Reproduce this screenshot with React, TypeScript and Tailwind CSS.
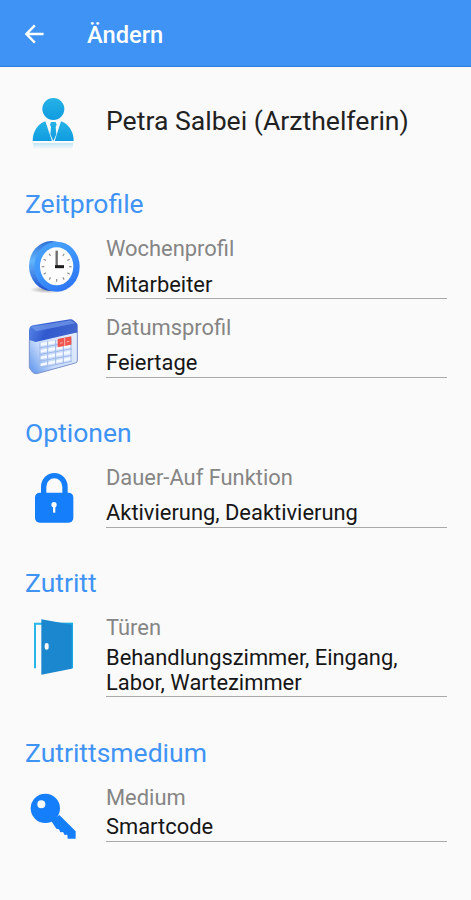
import type { ReactNode } from "react";

function BackArrow() {
  return (
    <svg width="20" height="20" viewBox="0 0 20 20" fill="none" stroke="#fff" strokeWidth="2.4">
      <path d="M19.6 10H2.4M10.8 1.4 2.4 10l8.4 8.6" />
    </svg>
  );
}

function PersonIcon() {
  return (
    <svg width="60" height="60" viewBox="12 30 180 180">
      <defs>
        <linearGradient id="person" x1="0" y1="0" x2="0" y2="1">
          <stop offset="0" stopColor="#27b3e6" />
          <stop offset="1" stopColor="#0f9be0" />
        </linearGradient>
        <linearGradient id="mirror" x1="0" y1="0" x2="0" y2="1">
          <stop offset="0" stopColor="#bfe6f5" />
          <stop offset="1" stopColor="#fafafa" />
        </linearGradient>
      </defs>
      <circle cx="100" cy="72" r="33" fill="url(#person)" />
      <path d="M76 109 96 168H38c0-26 13-50 38-59Z" fill="url(#person)" />
      <path d="M123 109 104 168h57c0-26-13-50-38-59Z" fill="url(#person)" />
      <path d="M93 111h14l3 8-3 7 2 22-9 20-9-20 2-22-3-7Z" fill="url(#person)" />
      <path d="M38 174h122l-3 18H42Z" fill="url(#mirror)" />
    </svg>
  );
}

function ClockIcon() {
  const ticks = [0, 30, 60, 90, 120, 150, 180, 210, 240, 270, 300, 330];
  return (
    <svg width="60" height="60" viewBox="12 18 180 180">
      <defs>
        <linearGradient id="rim" x1="0" y1="0" x2="0.6" y2="1">
          <stop offset="0" stopColor="#49a4fb" />
          <stop offset="0.5" stopColor="#3f97fb" />
          <stop offset="1" stopColor="#2f78f5" />
        </linearGradient>
        <linearGradient id="side" x1="0" y1="0" x2="0" y2="1">
          <stop offset="0" stopColor="#2e6fd6" />
          <stop offset="0.4" stopColor="#64b6fb" />
          <stop offset="1" stopColor="#1f4fd0" />
        </linearGradient>
        <radialGradient id="clockShadow">
          <stop offset="0" stopColor="#777" stopOpacity="0.7" />
          <stop offset="1" stopColor="#777" stopOpacity="0" />
        </radialGradient>
      </defs>
      <ellipse cx="82" cy="179" rx="52" ry="11" fill="url(#clockShadow)" />
      <ellipse cx="94" cy="108" rx="67" ry="75" fill="url(#side)" />
      <ellipse cx="111" cy="110" rx="68" ry="75" fill="url(#rim)" />
      <ellipse cx="110" cy="109" rx="50" ry="57" fill="#fdfdfd" />
      {ticks.map((a) => (
        <path key={a} d="M110 65v8" transform={`rotate(${a} 110 110)`} stroke="#8d8d92" strokeWidth="3.5" />
      ))}
      <path d="M110 62v48" stroke="#6c6c6c" strokeWidth="7" />
      <path d="M105 110h27" stroke="#1c1c1c" strokeWidth="9" />
    </svg>
  );
}

function CalendarIcon() {
  return (
    <svg width="60" height="60" viewBox="12 15 180 180">
      <defs>
        <linearGradient id="sheet" x1="0" y1="0.8" x2="1" y2="0.2">
          <stop offset="0" stopColor="#6ea0ef" />
          <stop offset="0.35" stopColor="#c6dafb" />
          <stop offset="1" stopColor="#e4edfd" />
        </linearGradient>
        <linearGradient id="band" x1="0" y1="0" x2="1" y2="0.2">
          <stop offset="0" stopColor="#5d8be8" />
          <stop offset="0.45" stopColor="#3059cf" />
          <stop offset="1" stopColor="#4065cc" />
        </linearGradient>
      </defs>
      <path d="M28 90 172 66v86q0 6-6 7L50 191q-8 1-13-5l-9-13Z" fill="url(#sheet)" stroke="#7d92cc" strokeWidth="3" />
      <path d="M27 60q1-12 12-14L150 28q6-1 10 3l9 7q4 3 4 9v20L47 96 27 89Z" fill="url(#band)" />
      <path d="M34 50 152 31l14 9L49 64Z" fill="#7fa5ef" opacity="0.6" />
      <path d="M60 104 110 95M60 124l94-17M60 144l94-18M60 165l94-20" stroke="#f4f8ff" strokeWidth="8" />
      <path
        d="M60 98v75M83 94v74M107 90v74M130 86v74M153 83v72M58 114l97-18M58 134l97-18M58 154l97-18M58 174l97-20"
        stroke="#9db7ea"
        strokeWidth="3"
        fill="none"
      />
      <path d="m113 87 41-8v25l-41 8Z" fill="#f0564e" />
      <path d="M134 84v24M120 100l8-2M140 96l8-2" stroke="#f8b5b0" strokeWidth="3" />
    </svg>
  );
}

function LockIcon() {
  return (
    <svg width="60" height="60" viewBox="12 9 180 180">
      <path d="M71 100V74a32 33 0 0 1 64 0v26" fill="none" stroke="#157efb" strokeWidth="16" />
      <rect x="45" y="92" width="115" height="90" rx="14" fill="#157efb" />
      <circle cx="102" cy="128" r="8" fill="#fafafa" />
      <path d="M99 132h7v20h-7Z" fill="#fafafa" />
    </svg>
  );
}

function DoorIcon() {
  return (
    <svg width="60" height="60" viewBox="12 15 180 180">
      <path d="M45 175V41h24" fill="none" stroke="#27b5ea" strokeWidth="6" />
      <path d="M110 38h49v137h-49Z" fill="#16a9e4" />
      <path d="m64 28 91 16v132L64 194Z" fill="#1b87ce" />
      <rect x="74" y="99" width="12" height="20" rx="6" fill="#fafafa" />
    </svg>
  );
}

function KeyIcon() {
  return (
    <svg width="60" height="60" viewBox="12 0 180 180">
      <circle cx="76" cy="70" r="44" fill="#157efb" />
      <path d="m94 108 24-18 49 49v22h-24l-1-12-8 1-5-9-8 1-4-9-8-2Z" fill="#157efb" />
      <circle cx="64" cy="58" r="12" fill="#fafafa" />
    </svg>
  );
}

function Section({ title, className, children }: { title: string; className: string; children: ReactNode }) {
  return (
    <section className={className}>
      <h2 className="pl-px text-[26.5px] leading-8 text-[#3e93f5]">{title}</h2>
      <div className="mt-4 flex flex-col gap-4">{children}</div>
    </section>
  );
}

function Field({
  icon,
  label,
  value,
  spacing = "mt-[9px] pb-px leading-[26px]",
}: {
  icon: ReactNode;
  label: string;
  value: string;
  spacing?: string;
}) {
  return (
    <div className="flex items-start">
      <div className="w-[82px] h-[60px] shrink-0">{icon}</div>
      <div className="w-[341px] border-b border-[#a9a9a9]">
        <div className="text-[21.9px] leading-[26px] text-[#858585]">{label}</div>
        <div className={`text-[21.9px] text-[#161616] ${spacing}`}>{value}</div>
      </div>
    </div>
  );
}

export default function App() {
  return (
    <div className="w-[471px] h-[900px] bg-[#fafafa] overflow-hidden font-['Roboto',sans-serif]">
      <header className="h-[67px] bg-[#3e93f5] border-b border-[#2f82e0] flex items-center pl-[24px] pt-[2px]">
        <BackArrow />
        <h1 className="ml-[43px] mt-[2px] text-[23.7px] font-medium text-white leading-8">Ändern</h1>
      </header>

      <main className="pl-[24px]">
        <div className="flex pt-7 h-[121px]">
          <div className="w-[82px] shrink-0">
            <PersonIcon />
          </div>
          <p className="mt-[10px] text-[26.6px] leading-8 text-[#222]">Petra Salbei (Arzthelferin)</p>
        </div>

        <Section title="Zeitprofile" className="h-[229px]">
          <Field icon={<ClockIcon />} label="Wochenprofil" value="Mitarbeiter" spacing="mt-[10px] leading-[26px]" />
          <Field icon={<CalendarIcon />} label="Datumsprofil" value="Feiertage" />
        </Section>
        <Section title="Optionen" className="h-[150px]">
          <Field icon={<LockIcon />} label="Dauer-Auf Funktion" value="Aktivierung, Deaktivierung" />
        </Section>
        <Section title="Zutritt" className="h-[170px]">
          <Field
            icon={<DoorIcon />}
            label="Türen"
            value="Behandlungszimmer, Eingang, Labor, Wartezimmer"
            spacing="mt-1 pb-px leading-[25px]"
          />
        </Section>
        <Section title="Zutrittsmedium" className="h-[150px]">
          <Field icon={<KeyIcon />} label="Medium" value="Smartcode" spacing="mt-[3px] pb-[2px] leading-[25px]" />
        </Section>
      </main>
    </div>
  );
}
